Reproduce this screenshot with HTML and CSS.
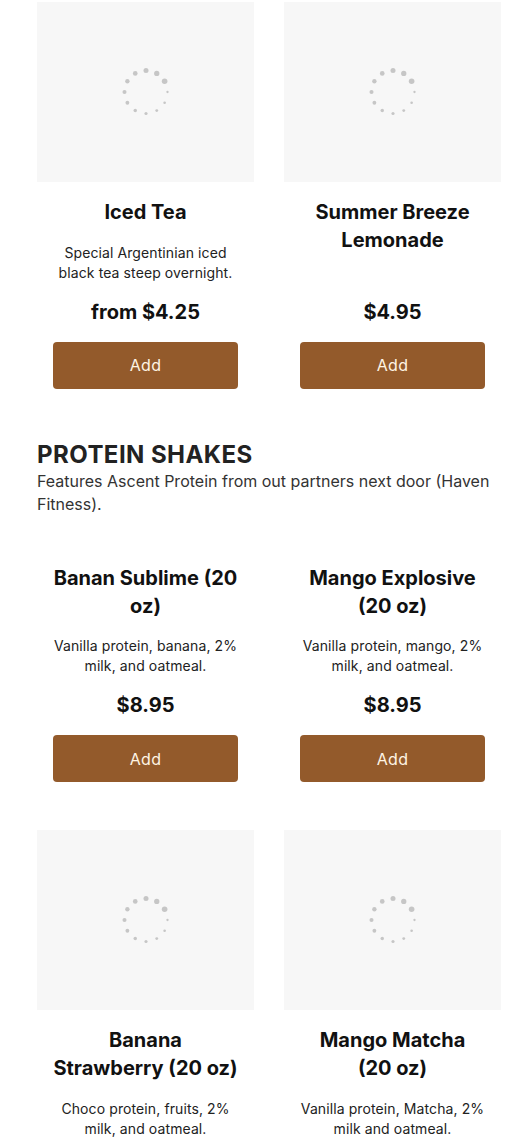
FILE: index.html
```html
<!DOCTYPE html>
<html>
<head>
<meta charset="utf-8">
<link rel="stylesheet" href="styles.css">
</head>
<body>
<main class="page">
  <section class="grid">
    <article class="card">
      <div class="thumb"><svg class="spinner" viewBox="-25 -25 50 50" width="50" height="50"></svg></div>
      <h3 class="title">Iced Tea</h3>
      <p class="desc">Special Argentinian iced black tea steep overnight.</p>
      <p class="price">from $4.25</p>
      <button class="add">Add</button>
    </article>
    <article class="card">
      <div class="thumb"><svg class="spinner" viewBox="-25 -25 50 50" width="50" height="50"></svg></div>
      <h3 class="title">Summer Breeze Lemonade</h3>
      <p class="price">$4.95</p>
      <button class="add">Add</button>
    </article>
  </section>

  <section class="category">
    <h2 class="cat-title">PROTEIN SHAKES</h2>
    <p class="cat-desc">Features Ascent Protein from out partners next door (Haven Fitness).</p>
  </section>

  <section class="grid">
    <article class="card">
      <h3 class="title">Banan Sublime (20 oz)</h3>
      <p class="desc">Vanilla protein, banana, 2% milk, and oatmeal.</p>
      <p class="price">$8.95</p>
      <button class="add">Add</button>
    </article>
    <article class="card">
      <h3 class="title">Mango Explosive (20 oz)</h3>
      <p class="desc">Vanilla protein, mango, 2% milk, and oatmeal.</p>
      <p class="price">$8.95</p>
      <button class="add">Add</button>
    </article>
    <article class="card">
      <div class="thumb"><svg class="spinner" viewBox="-25 -25 50 50" width="50" height="50"></svg></div>
      <h3 class="title">Banana Strawberry (20 oz)</h3>
      <p class="desc">Choco protein, fruits, 2% milk, and oatmeal.</p>
      <p class="price">$8.95</p>
      <button class="add">Add</button>
    </article>
    <article class="card">
      <div class="thumb"><svg class="spinner" viewBox="-25 -25 50 50" width="50" height="50"></svg></div>
      <h3 class="title">Mango Matcha (20&nbsp;oz)</h3>
      <p class="desc">Vanilla protein, Matcha, 2% milk and oatmeal.</p>
      <p class="price">$8.95</p>
      <button class="add">Add</button>
    </article>
  </section>
</main>
<script src="script.js"></script>
</body>
</html>
```

FILE: styles.css
```css
* { box-sizing: border-box; }
html, body { margin: 0; padding: 0; background: #fff; }
body { font-family: Inter, "Liberation Sans", sans-serif; color: #111; }
.page { padding: 2px 24px 40px 37px; width: 525px; }
.grid {
  display: grid;
  grid-template-columns: 217px 217px;
  column-gap: 30px;
  row-gap: 48px;
}
.card { display: flex; flex-direction: column; align-items: center; text-align: center; }
.thumb {
  width: 217px; height: 180px; background: #f7f7f7;
  display: flex; align-items: center; justify-content: center;
  margin-bottom: 16px;
}
.spinner { display: block; }
.spinner circle { fill: #c6c6c6; }
.title {
  margin: 0; font-size: 20px; line-height: 28px; font-weight: 700;
  color: #111; width: 184.3px;
}
.desc {
  margin: 16.5px 0 0; font-size: 14px; line-height: 20px; color: #222;
  padding: 0 16px; letter-spacing: 0.1px;
}
.price {
  margin: auto 0 0; padding-top: 15px; font-size: 20px; line-height: 28px;
  font-weight: 700; color: #111;
}
.add {
  margin-top: 16px; width: 185px; height: 47px; border: 0; border-radius: 4px;
  background: #935a2b; color: #fff4e4; font-family: Inter, "Liberation Sans", sans-serif;
  font-size: 16px; letter-spacing: 0.3px;
}
.category { margin: 51px 0 48px; }
.cat-title {
  margin: 0; font-size: 24px; line-height: 30px; font-weight: 700;
  color: #222; letter-spacing: 0.45px;
}
.cat-desc { margin: 0; font-size: 16px; line-height: 23px; color: #333; }
```

FILE: script.js
```js
document.querySelectorAll('.spinner').forEach(function (svg) {
  var ns = 'http://www.w3.org/2000/svg';
  for (var k = 0; k < 12; k++) {
    var deg = 60 - 30 * k;
    var a = deg * Math.PI / 180;
    var c = document.createElementNS(ns, 'circle');
    c.setAttribute('cx', (21.5 * Math.sin(a)).toFixed(2));
    c.setAttribute('cy', (-21.5 * Math.cos(a)).toFixed(2));
    c.setAttribute('r', (2.8 - k * 0.15).toFixed(2));
    svg.appendChild(c);
  }
});
```
